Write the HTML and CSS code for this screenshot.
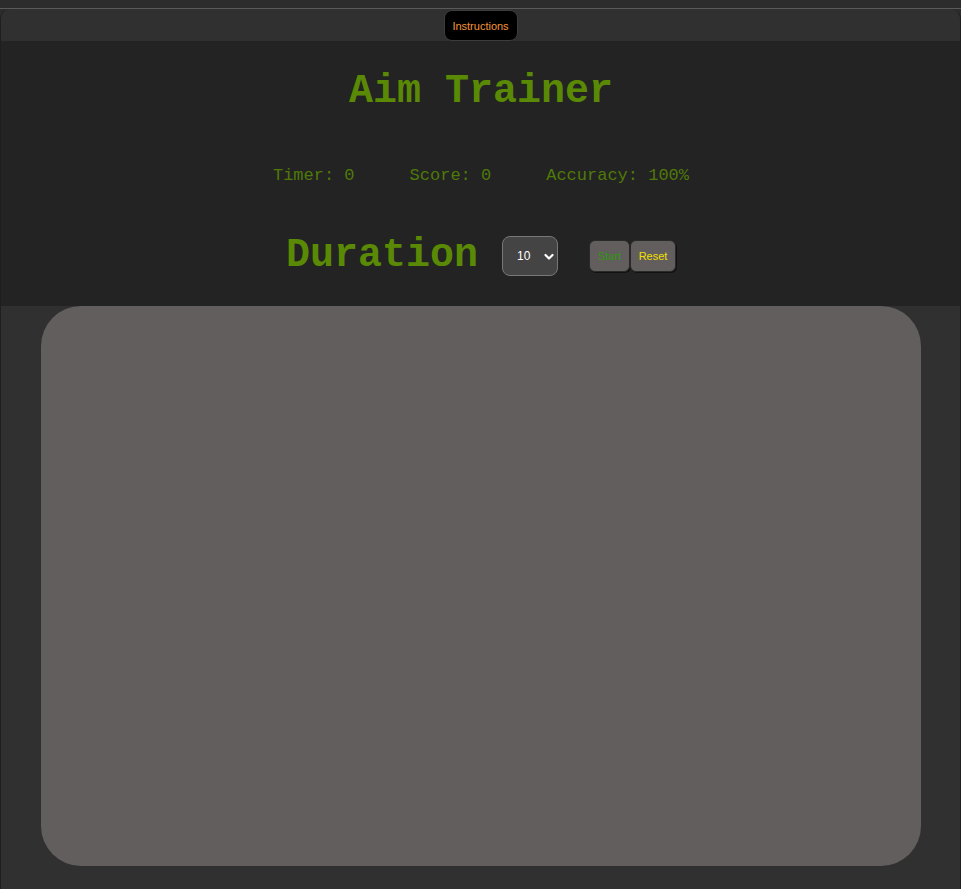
FILE: index.html
```html
<!DOCTYPE html>
<html>
<head>
<meta charset="utf-8">
<title>Aim Trainer</title>
<link rel="stylesheet" href="styles.css">
</head>
<body>
<div class="topstrip"></div>
<div class="topline"></div>
<div class="app">
  <div class="navbar">
    <button class="instr-btn">Instructions</button>
  </div>
  <div class="hud">
    <h1 class="title">Aim Trainer</h1>
    <div class="stats">
      <span class="stat">Timer: 0</span>
      <span class="stat">Score: 0</span>
      <span class="stat">Accuracy: 100%</span>
    </div>
    <div class="controls">
      <span class="duration-label">Duration</span>
      <select class="duration-select">
        <option>10</option>
        <option>20</option>
        <option>30</option>
      </select>
      <div class="btns">
        <button class="btn btn-start">Start</button>
        <button class="btn btn-reset">Reset</button>
      </div>
    </div>
  </div>
  <div class="arena">
    <div class="board"></div>
  </div>
</div>
</body>
</html>
```

FILE: styles.css
```css
* { box-sizing: border-box; }
html, body {
  margin: 0;
  padding: 0;
  background: #2c2c2c;
  height: 889px;
  overflow: hidden;
}
.topstrip { height: 8px; background: #2c2c2c; }
.topline { height: 1px; background: #5a5a5a; }
.app {
  background: #303030;
  border: 1px solid #1e1e1e;
  border-top: none;
  border-radius: 10px;
  height: 890px;
  overflow: hidden;
}
.navbar {
  height: 32px;
  display: flex;
  justify-content: center;
  align-items: flex-end;
  background: #303030;
}
.instr-btn {
  width: 74px;
  height: 31px;
  background: #000;
  color: #f59438;
  border: 1px solid #3c3c3c;
  border-radius: 8px;
  font-family: "Liberation Sans", Arial, sans-serif;
  font-size: 11px;
  padding: 0;
}
.hud {
  background: #232323;
  height: 265px;
  padding-top: 28px;
  display: flex;
  flex-direction: column;
  align-items: center;
}
.title {
  margin: 0;
  font-family: "Liberation Mono", "Courier New", monospace;
  font-weight: bold;
  font-size: 40px;
  line-height: 46px;
  color: #5a8a05;
  margin-left: 1px;
}
.stats {
  margin-top: 51px;
  display: flex;
  gap: 55px;
  font-family: "Liberation Mono", "Courier New", monospace;
  font-size: 17px;
  line-height: 20px;
  color: #4f7a08;
  margin-left: 1px;
}
.controls {
  margin-top: 50px;
  height: 40px;
  display: flex;
  align-items: center;
  margin-left: 1px;
}
.duration-label {
  font-family: "Liberation Mono", "Courier New", monospace;
  font-weight: bold;
  font-size: 40px;
  line-height: 40px;
  color: #5a8a05;
  margin-right: 24px;
}
.duration-select {
  appearance: none;
  -webkit-appearance: none;
  width: 56px;
  height: 40px;
  background-color: #444444;
  background-image: url("data:image/svg+xml;utf8,<svg xmlns='http://www.w3.org/2000/svg' width='10' height='8' viewBox='0 0 10 8'><path d='M1.5 2 L5 5.5 L8.5 2' fill='none' stroke='white' stroke-width='2.2' stroke-linecap='round' stroke-linejoin='round'/></svg>");
  background-repeat: no-repeat;
  background-position: 41px 16px;
  border: 1px solid #787878;
  border-radius: 8px;
  color: #fff;
  font-family: "Liberation Sans", Arial, sans-serif;
  font-size: 12px;
  padding: 0 0 0 14px;
  margin-right: 31px;
}
.btns { display: flex; }
.btn {
  height: 32px;
  background: #625e5d;
  border: 1px solid #2a2a2a;
  border-radius: 6px;
  font-family: "Liberation Sans", Arial, sans-serif;
  font-size: 11px;
  padding: 0;
  box-shadow: 1px 1px 0 #111;
}
.btn-start { width: 41px; color: #32960f; }
.btn-reset { width: 46px; color: #f0e000; }
.arena {
  background: #303030;
  display: flex;
  justify-content: center;
}
.board {
  width: 880px;
  height: 560px;
  background: #625e5d;
  border-radius: 40px;
}
```
